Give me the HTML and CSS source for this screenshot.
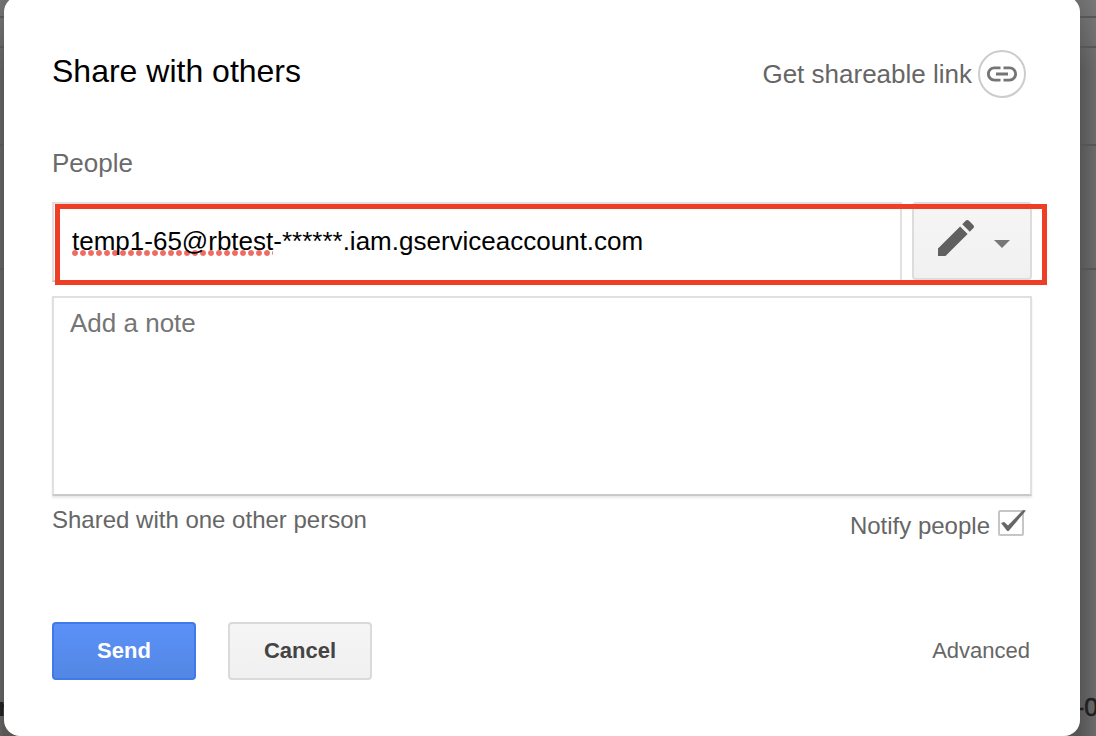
FILE: index.html
```html
<!DOCTYPE html>
<html lang="en">
<head>
<meta charset="utf-8">
<title>Share with others</title>
<link rel="stylesheet" href="styles.css">
</head>
<body>
<div class="backdrop">
  <span class="behind behind-left">r</span>
  <span class="behind behind-right">-0</span>
</div>
<main class="dialog">
  <header class="header">
    <h1 class="title">Share with others</h1>
    <a class="get-link">Get shareable link
      <span class="link-circle">
        <svg width="36" height="36" viewBox="0 0 24 24" fill="#757575"><path d="M3.9 12c0-1.71 1.39-3.1 3.1-3.1h4V7H7c-2.76 0-5 2.24-5 5s2.24 5 5 5h4v-1.9H7c-1.71 0-3.1-1.39-3.1-3.1zM8 13h8v-2H8v2zm9-6h-4v1.9h4c1.71 0 3.1 1.39 3.1 3.1s-1.39 3.1-3.1 3.1h-4V17h4c2.76 0 5-2.24 5-5s-2.24-5-5-5z"/></svg>
      </span>
    </a>
  </header>
  <div class="label">People</div>
  <div class="people-row">
    <div class="input"><span class="misspelt">temp1-65@rbtest</span>-******.iam.gserviceaccount.com</div>
    <div class="role">
      <svg width="48" height="48" viewBox="0 0 24 24" fill="#606060"><path d="M3 17.25V21h3.75L17.81 9.94l-3.75-3.75L3 17.25zM20.71 7.04c.39-.39.39-1.02 0-1.41l-2.34-2.34c-.39-.39-1.02-.39-1.41 0l-1.83 1.83 3.75 3.75 1.83-1.83z"/></svg>
      <svg class="caret" width="16" height="8" viewBox="0 0 16 8" fill="#777"><path d="M0 0h16L8 8z"/></svg>
    </div>
    <div class="highlight"></div>
  </div>
  <div class="note">Add a note</div>
  <div class="status">
    <span class="shared">Shared with one other person</span>
    <label class="notify">Notify people
      <svg class="check" width="30" height="30" viewBox="0 0 30 30" fill="none"><rect x="2" y="4" width="24" height="24" rx="1" stroke="#c6c6c6" stroke-width="2"/><path d="M4 16L7.2 15L11 18.4L26 3L29 3.6L11.6 24L10.2 24Z" fill="#666"/></svg>
    </label>
  </div>
  <footer class="footer">
    <div class="button primary">Send</div>
    <div class="button">Cancel</div>
    <a class="advanced">Advanced</a>
  </footer>
</main>
</body>
</html>
```
FILE: styles.css
```css
* { box-sizing: border-box; }
html, body { margin: 0; height: 736px; overflow: hidden; }
body {
  position: relative;
  background: #686868;
  color: #666;
  font: 26px/30px "Liberation Sans", Arial, sans-serif;
}
svg { display: block; flex: none; }

/* dimmed page behind the dialog */
.backdrop {
  position: absolute;
  inset: 0;
  background:
    linear-gradient(#565656, #565656) 0 16px / 100% 2px no-repeat,
    linear-gradient(#565656, #565656) 0 46px / 100% 2px no-repeat,
    linear-gradient(#555, #555) 0 144px / 100% 2px no-repeat,
    linear-gradient(#555, #555) 0 268px / 100% 2px no-repeat,
    linear-gradient(rgba(130,130,130,.55), rgba(130,130,130,0) 70px),
    linear-gradient(90deg, #605f5d 0, #585755 4px, #565656 1080px, #6a6a6a 1096px);
}
.behind { position: absolute; color: #1f1f1f; white-space: nowrap; }
.behind-left { left: -2px; top: 692px; font-weight: bold; }
.behind-right { left: 1076px; top: 692px; font-size: 25px; -webkit-text-stroke: .6px #1f1f1f; }

.dialog {
  position: relative;
  width: 1076px;
  height: 740px;
  margin: -4px 0 0 4px;
  padding: 54px 48px 0;
  border-radius: 16px;
  background: #fff;
}
.header { display: flex; justify-content: space-between; height: 48px; padding-right: 6px; }
.title { margin: 0; padding-top: 3px; color: #000; font-size: 32px; font-weight: normal; line-height: 36px; }
.get-link { display: flex; align-items: center; gap: 6px; }
.link-circle {
  display: flex;
  align-items: center;
  justify-content: center;
  width: 48px;
  height: 48px;
  border: 2px solid #ccc;
  border-radius: 50%;
}
.label { margin: 50px 0 24px; color: #6b6b6b; }

.people-row { position: relative; display: flex; gap: 10px; width: 980px; height: 80px; }
.input {
  width: 850px;
  height: 80px;
  padding: 22px 0 0 18px;
  border: 2px solid #e0e0e0;
  border-bottom-color: #c9c9c9;
  color: #000;
  white-space: nowrap;
}
.misspelt {
  background: radial-gradient(circle at 3px 3px, rgba(232,58,46,.75) 2.4px, rgba(232,58,46,0) 3.5px) 0 100% / 8px 6px repeat-x;
}
.role {
  display: flex;
  align-items: flex-start;
  gap: 14px;
  width: 120px;
  height: 78px;
  padding: 10px 0 0 18px;
  border: 2px solid #dcdcdc;
  border-radius: 4px;
  background: linear-gradient(#f5f5f5, #f1f1f1);
}
.caret { margin-top: 26px; }
.highlight {
  position: absolute;
  left: 3px;
  top: 2px;
  width: 992px;
  height: 81px;
  border: 5px solid #ee3f26;
}

.note {
  width: 980px;
  height: 200px;
  margin-top: 14px;
  padding: 10px 16px;
  border: 2px solid #e0e0e0;
  border-bottom-color: #c9c9c9;
  box-shadow: 0 2px 2px rgba(0,0,0,.09);
  color: #757575;
}
.status {
  display: flex;
  justify-content: space-between;
  height: 126px;
  padding: 10px 5px 0 0;
  font-size: 24px;
  line-height: 28px;
}
.notify { display: flex; align-items: flex-start; gap: 7px; height: 36px; padding-top: 6px; }
.check { margin-top: -5px; }

.footer { display: flex; gap: 32px; width: 978px; font-size: 22px; line-height: 54px; }
.button {
  width: 144px;
  height: 58px;
  border: 2px solid #dadada;
  border-radius: 4px;
  background: linear-gradient(#f5f5f5, #f0f0f0);
  color: #444;
  font-weight: bold;
  text-align: center;
}
.primary { border-color: #407ae8; background: linear-gradient(#5b91f8, #5387e4); color: #fff; }
.advanced { margin-left: auto; padding-top: 2px; }
```
